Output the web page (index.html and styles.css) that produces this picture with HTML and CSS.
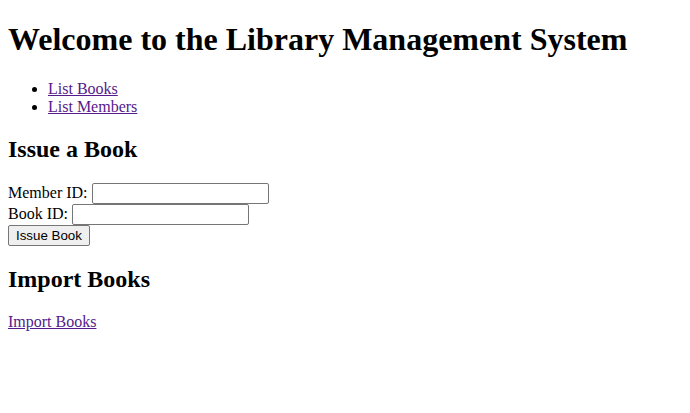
FILE: index.html
```html
<!DOCTYPE html>
<html>
<head>
<meta charset="utf-8">
<title>Library Management System</title>
<link rel="stylesheet" href="styles.css">
</head>
<body class="page">
<h1 class="title">Welcome to the Library Management System</h1>
<ul class="nav">
<li><a class="link" href="#books">List Books</a></li>
<li><a class="link" href="#members">List Members</a></li>
</ul>
<h2 class="section">Issue a Book</h2>
<form class="issue-form">
<label class="lbl">Member ID: <input class="field" type="text"></label><br>
<label class="lbl">Book ID: <input class="field" type="text"></label><br>
<button class="btn" type="button">Issue Book</button>
</form>
<h2 class="section">Import Books</h2>
<p class="para"><a class="link" href="#import">Import Books</a></p>
</body>
</html>
```
FILE: styles.css
```css
html { background: #fff; }
.page {
  margin: 8px;
  font-family: "Liberation Serif", "Times New Roman", serif;
  font-size: 16px;
  color: #000;
}
.title { font-size: 32px; font-weight: bold; margin: 13.44px 0 21.44px; }
.section { font-size: 24px; font-weight: bold; margin: 19.92px 0; }
.nav { margin: 16px 0; padding-left: 40px; list-style: disc; }
.para { margin: 16px 0; }
.link { color: #551a8b; text-decoration: underline; }
.issue-form { margin: 0; }
.field {
  font-family: "Liberation Sans", Arial, sans-serif;
  font-size: 13.333px;
  width: 171px;
  height: 17px;
  padding: 1px 2px;
  border: 1px solid #767676;
  border-radius: 2px;
  margin: 0;
}
.btn {
  font-family: "Liberation Sans", Arial, sans-serif;
  font-size: 13.333px;
  padding: 2px 7px;
  border: 1px solid #767676;
  border-radius: 2px;
  background: #efefef;
  color: #000;
  margin: 0;
}
```
